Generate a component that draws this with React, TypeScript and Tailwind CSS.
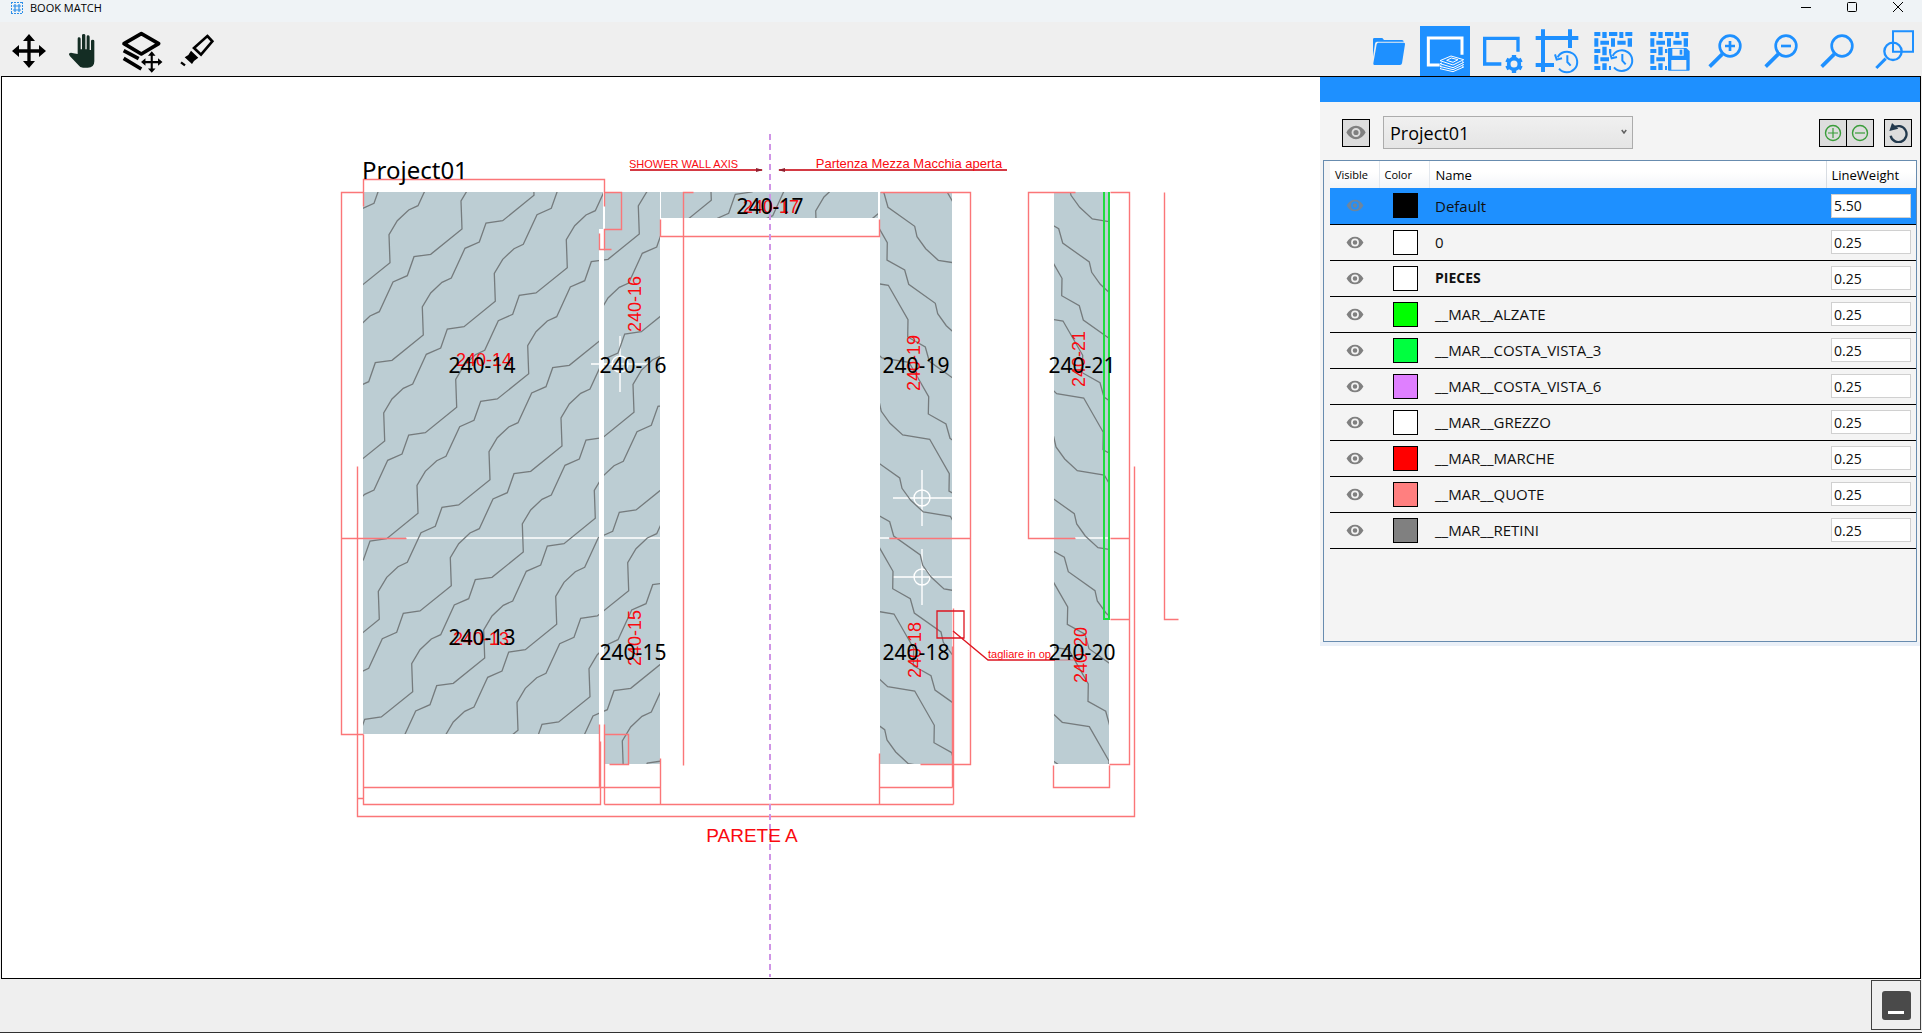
import { useState } from "react";
import type { ReactNode } from "react";

type Point = [number, number];

const layers = [
  { name: "Default", swatch: "bg-black", weight: "5.50" },
  { name: "0", swatch: "bg-white", weight: "0.25" },
  { name: "PIECES", swatch: "bg-white", weight: "0.25", bold: true },
  { name: "__MAR__ALZATE", swatch: "bg-[#00ff00]", weight: "0.25" },
  { name: "__MAR__COSTA_VISTA_3", swatch: "bg-[#00ff3f]", weight: "0.25" },
  { name: "__MAR__COSTA_VISTA_6", swatch: "bg-[#df7fff]", weight: "0.25" },
  { name: "__MAR__GREZZO", swatch: "bg-white", weight: "0.25" },
  { name: "__MAR__MARCHE", swatch: "bg-[#ff0000]", weight: "0.25" },
  { name: "__MAR__QUOTE", swatch: "bg-[#ff7f7f]", weight: "0.25" },
  { name: "__MAR__RETINI", swatch: "bg-[#808080]", weight: "0.25" },
];

/* ---------- toolbar icons ---------- */

function Icon({ children }: { children: ReactNode }) {
  return (
    <svg viewBox="0 0 150 150" className="h-[50px] w-[50px]" fill="none" aria-hidden="true">
      {children}
    </svg>
  );
}

function MoveShape() {
  return (
    <>
      <path d="M75 35V115M35 75H115" stroke="currentColor" strokeWidth="10" />
      <path
        d="M75 24L93 45H57ZM75 126L93 105H57ZM24 75L45 57V93ZM126 75L105 57V93Z"
        fill="currentColor"
      />
    </>
  );
}

function ClockShape() {
  return (
    <>
      <path d="M74 90A31 31 0 1 1 78 124" stroke="currentColor" strokeWidth="6" />
      <path d="M66 81L71 97L87 93" stroke="currentColor" strokeWidth="6" />
      <path d="M103 84V104L113 115" stroke="currentColor" strokeWidth="6" />
    </>
  );
}

function WeaveShape() {
  return (
    <path
      d="M19 18h18v12H19zM43 18h13v18H43zM63 18h25v12H63zM94 18h12v18H94zM112 18h21v12H112z
      M19 37h12v25H19zM37 44h26v12H37zM69 37h12v25H69zM88 44h25v12H88zM119 37h13v25H119z
      M19 69h18v12H19zM43 62h13v26H43zM63 69h7v12H63z
      M19 87h12v26H19zM37 94h26v12H37z
      M19 120h18v12H19zM43 112h13v20H43zM63 120h6v12H63z"
      fill="currentColor"
    />
  );
}

function MagnifierShape() {
  return (
    <>
      <circle cx="90" cy="60" r="31" stroke="currentColor" strokeWidth="8" />
      <path d="M66 85L29 122" stroke="currentColor" strokeWidth="11" />
      <path d="M71 80L58 93" stroke="currentColor" strokeWidth="6" />
    </>
  );
}

const leftTools = [
  {
    label: "Move",
    icon: <MoveShape />,
  },
  {
    label: "Pan",
    icon: (
      <path
        d="M53 84V38q0-4 4-4t5 4v32h4V28q0-4 5-4t5 4v42h4V32q0-4 4-4t5 4v40h4V45q0-4 5-4t5 4v61q0 19-20 19H69q-9 0-14-8L30 91q-5-6-2-9q4-3 12 0z"
        fill="#142d24"
      />
    ),
  },
  {
    label: "Move layers",
    icon: (
      <>
        <path d="M76 23L128 53L76 84L24 53Z" stroke="currentColor" strokeWidth="11" strokeLinejoin="round" />
        <path d="M23 74L68 98M23 97L76 129" stroke="currentColor" strokeWidth="11" />
        <g transform="translate(60 61) scale(0.63)">
          <MoveShape />
        </g>
      </>
    ),
  },
  {
    label: "Highlight",
    icon: (
      <>
        <path d="M106 30L121 46L87 86L66 66Z" stroke="currentColor" strokeWidth="8" />
        <path d="M57 74L79 95L66 105L60 114L38 94L49 87Z" fill="currentColor" />
        <path d="M27 109L39 118" stroke="currentColor" strokeWidth="7" />
      </>
    ),
  },
];

const rightTools = [
  {
    label: "Open",
    icon: (
      <>
        <path d="M27 92V40q0-4 4-4h24l5 6h54q5 0 5 5H39q-5 0-6 6z" fill="currentColor" />
        <path d="M38 55q1-5 5-5h77q4 0 3 5l-9 57q-1 5-6 5H31q-4 0-3-5z" fill="currentColor" />
      </>
    ),
  },
  {
    label: "Layers",
    active: true,
    icon: (
      <>
        <path d="M126 86V36H25V117H59" stroke="currentColor" strokeWidth="9" />
        <path
          d="M60 104L93 90L131 101L99 117ZM66 111L60 113L99 125L131 109L126 107M64 118L60 121L99 131L131 116L127 114M64 125L60 128L99 137L131 123L127 121M80 103l14-7l20 5l-15 8z"
          stroke="currentColor"
          strokeWidth="3"
        />
      </>
    ),
  },
  {
    label: "View settings",
    icon: (
      <>
        <path d="M126 77V37H26V114H76" stroke="currentColor" strokeWidth="10" />
        <circle cx="114" cy="114" r="16" stroke="currentColor" strokeWidth="11" />
        <path
          d="M114 87V98M114 130V141M91 101L101 106M127 122L137 127M91 127L101 122M127 106L137 101"
          stroke="currentColor"
          strokeWidth="13"
        />
      </>
    ),
  },
  {
    label: "Frame history",
    icon: (
      <>
        <path d="M33 10V138M11 36H139M114 10V66M11 117H66" stroke="currentColor" strokeWidth="12" />
        <g transform="translate(3 4)">
          <ClockShape />
        </g>
      </>
    ),
  },
  {
    label: "Pattern history",
    icon: (
      <>
        <WeaveShape />
        <circle cx="98" cy="100" r="33" fill="#f0f0f0" />
        <ClockShape />
      </>
    ),
  },
  {
    label: "Save pattern",
    icon: (
      <>
        <WeaveShape />
        <path d="M75 66h52l10 10v55q0 3-3 3H75q-3 0-3-3V69q0-3 3-3z" fill="currentColor" />
        <path d="M85 68h34v21H85zM82 102h45v29H82z" fill="#f0f0f0" />
        <path d="M107 71h8v15h-8z" fill="currentColor" />
      </>
    ),
  },
  {
    label: "Zoom in",
    icon: (
      <>
        <MagnifierShape />
        <path d="M75 60H105M90 45V75" stroke="currentColor" strokeWidth="8" />
      </>
    ),
  },
  {
    label: "Zoom out",
    icon: (
      <>
        <MagnifierShape />
        <path d="M75 60H105" stroke="currentColor" strokeWidth="8" />
      </>
    ),
  },
  {
    label: "Zoom",
    icon: <MagnifierShape />,
  },
  {
    label: "Zoom window",
    icon: (
      <>
        <path d="M75 16H135V77H75Z" stroke="currentColor" strokeWidth="6" />
        <circle cx="75" cy="76" r="26" stroke="currentColor" strokeWidth="7" />
        <path d="M53 98L25 126" stroke="currentColor" strokeWidth="9" />
      </>
    ),
  },
];

function EyeIcon({ className }: { className: string }) {
  return (
    <svg viewBox="0 0 54 40" className={className} aria-hidden="true">
      <path
        fillRule="evenodd"
        d="M1 20Q11 2 27 2T53 20Q43 38 27 38T1 20ZM27 8a12 12 0 1 0 0 24a12 12 0 1 0 0-24ZM27 13a7 7 0 1 1 0 14a7 7 0 1 1 0-14Z"
        fill="currentColor"
      />
    </svg>
  );
}

/* ---------- marble veins ---------- */

// One repeat of the vein, in thirds of a pixel.
const leftMotif: Point[] = [
  [0, 0], [3, 84], [-91, 160], [-141, 167], [-161, 224],
  [-204, 243], [-245, 332], [-273, 345], [-307, 377],
];
const rightMotif: Point[] = [
  [0, 0], [-1, 52], [52, 82], [64, 125], [144, 182],
  [151, 213], [177, 249], [215, 284], [296, 297],
];

function veins(origin: Point, step: Point, period: Point, motif: Point[], from: number, to: number) {
  let d = "";
  for (let k = from; k <= to; k++) {
    for (let j = -6; j <= 6; j++) {
      motif.forEach(([x, y], i) => {
        const px = (origin[0] + k * step[0] + j * period[0] + x) / 3;
        const py = (origin[1] + k * step[1] + j * period[1] + y) / 3;
        d += `${j === -6 && i === 0 ? "M" : "L"}${px.toFixed(1)} ${py.toFixed(1)}`;
      });
    }
  }
  return d;
}

const leftVeins = veins([1483, 820], [216, -101], [-332, 419], leftMotif, -8, 14);
const rightVeins = veins([2662, 728], [62, 231], [355, 400], rightMotif, -12, 12);

const leftPieces = "M363 192H603V229H599V734H363ZM605 192H660V764H604V229H605ZM661 192H878V218H661Z";
const rightPieces = "M880 192H952V764H880ZM1054 192H1109V764H1054Z";

const pieceLabels = [
  { id: "240-14", x: 482, y: 373, red: { x: 484, y: 366 } },
  { id: "240-13", x: 482, y: 645, red: { x: 481, y: 645 } },
  { id: "240-16", x: 633, y: 373, red: { x: 641, y: 304, up: true } },
  { id: "240-15", x: 633, y: 660, red: { x: 641, y: 638, up: true } },
  { id: "240-17", x: 770, y: 214, red: { x: 771, y: 213 } },
  { id: "240-19", x: 916, y: 373, red: { x: 920, y: 363, up: true } },
  { id: "240-18", x: 916, y: 660, red: { x: 921, y: 650, up: true } },
  { id: "240-21", x: 1082, y: 373, red: { x: 1085, y: 359, up: true } },
  { id: "240-20", x: 1082, y: 660, red: { x: 1087, y: 655, up: true } },
];

function Drawing() {
  return (
    <svg className="h-full w-full" fill="none" role="img" aria-label="Project01 wall drawing">
      <defs>
        <clipPath id="left-pieces">
          <path d={leftPieces} />
        </clipPath>
        <clipPath id="right-pieces">
          <path d={rightPieces} />
        </clipPath>
      </defs>
      <g transform="translate(-2 -77)">
        <path d={leftPieces + rightPieces} fill="#bccdd3" />

        {/* joints and drill marks */}
        <g stroke="#ffffff" strokeWidth="1.4">
          <path d="M406 538H660M880 538H889M1075 538H1109" />
          <path d="M893 498H952M922 470V526M893 577H952M922 549V605M591 364H650M620 336V392" />
          <circle cx="922" cy="498" r="8" />
          <circle cx="922" cy="577" r="8" />
          <circle cx="620" cy="364" r="8" />
        </g>

        <g stroke="#757b7d" strokeWidth="1.3">
          <path d={leftVeins} clipPath="url(#left-pieces)" />
          <path d={rightVeins} clipPath="url(#right-pieces)" />
        </g>

        {/* dimension lines */}
        <path
          d="M363 206V179H604V206M363 192H341V734H363M341 538H406M604 192H621V229H604V250M599 233V249H611
          M357 466V816H1134V466M357 798H363M363 734V804H600V741M363 787H660M599 724V787M604 724V804M604 804H953
          M660 758V804M604 734H628V764H609M660 219V236H879V219M693 192H683V765
          M880 192H970V764H920M889 538H970M1075 192H1028V538H1075M1110 192H1129V764H1109M1110 538H1129
          M1110 619H1129M1164 192V619H1178M879 753V804M953 608V804M952 646V787M879 787H952M1053 765V787H1109V765"
          transform="translate(0.5 0.5)"
          stroke="#fb7678"
          strokeWidth="1.4"
        />
        <path d="M1104 192V619H1109V192" stroke="#1fdd3f" strokeWidth="2" />
        <path d="M770 134V977" stroke="#cf93e6" strokeWidth="2" strokeDasharray="6 4" />
        <path d="M630 170H762M779 170H1007" stroke="#d43a44" strokeWidth="2" />
        <path d="M763 170L756 168V172ZM778 170L785 168V172Z" fill="#902030" />
        <path d="M937 611H964V638H937ZM953 631L988 660H1055" stroke="#dd1520" strokeWidth="1.3" />
        <path d="M1055 660H1080" stroke="#cc8f96" strokeWidth="1.3" />

        <g className="font-['Liberation_Sans',sans-serif]" fill="#fa0a10">
          <text x="629" y="168" className="text-[11px]">SHOWER WALL AXIS</text>
          <text x="909" y="168" textAnchor="middle" className="text-[13px]">
            Partenza Mezza Macchia aperta
          </text>
          <text x="988" y="658" className="text-[11px]">tagliare in op</text>
          <text x="752" y="842" textAnchor="middle" className="text-[19px]">PARETE A</text>
          {pieceLabels.map(({ id, red }) => (
            <text
              key={id}
              textAnchor="middle"
              className="text-[18px]"
              transform={`translate(${red.x} ${red.y}) rotate(${red.up ? -90 : 0})`}
            >
              {id}
            </text>
          ))}
        </g>

        <g className="font-['Noto_Sans',sans-serif]" fill="#000000">
          <text x="362" y="179" className="text-[24px]">Project01</text>
          {pieceLabels.map(({ id, x, y }) => (
            <text key={id} x={x} y={y} textAnchor="middle" className="text-[21px]">
              {id}
            </text>
          ))}
        </g>
      </g>
    </svg>
  );
}

function LayersPanel() {
  const [selected, setSelected] = useState("Default");
  const toolButton = "flex h-7 items-center justify-center border border-black bg-[#dddddd]";

  return (
    <aside className="absolute top-0 right-0 w-[600px] border-b-4 border-[#eaf0f8] bg-[#f4f4f4]">
      <div className="h-[25px] bg-[#1e90ff]" />
      <div className="flex items-center pt-[14px] pr-2 pb-[11px] pl-[22px]">
        <button type="button" aria-label="Toggle all layers" className={`${toolButton} w-7 text-[#808080]`}>
          <EyeIcon className="h-[15px] w-5" />
        </button>
        <div className="relative ml-[13px] w-[250px]">
          <select
            aria-label="Project"
            className="block h-[33px] w-full appearance-none border border-[#acacac] bg-linear-to-b from-[#f0f0f0] to-[#e5e5e5] pl-[6px] text-[18px] leading-7 text-black"
          >
            <option>Project01</option>
          </select>
          <svg viewBox="0 0 8 6" className="pointer-events-none absolute top-[13px] right-[6px] h-[5px] w-[6px]">
            <path d="M1 1L4 5L7 1" fill="none" stroke="#606060" strokeWidth="2" />
          </svg>
        </div>
        <div className="ml-auto flex">
          <button type="button" aria-label="Expand" className={`${toolButton} w-7`}>
            <svg viewBox="0 0 18 18" className="h-[18px] w-[18px]" fill="none" stroke="#3a9d3a">
              <circle cx="9" cy="9" r="7.5" strokeWidth="1.4" />
              <path d="M4 9H14M9 4V14" strokeWidth="1.2" />
            </svg>
          </button>
          <button type="button" aria-label="Collapse" className={`${toolButton} w-[27px] border-l-0`}>
            <svg viewBox="0 0 18 18" className="h-[18px] w-[18px]" fill="none" stroke="#3a9d3a">
              <circle cx="9" cy="9" r="7.5" strokeWidth="1.4" />
              <path d="M4 9H14" strokeWidth="1.2" />
            </svg>
          </button>
        </div>
        <button type="button" aria-label="Reset" className={`${toolButton} ml-[10px] w-7`}>
          <svg viewBox="0 0 60 60" className="h-5 w-5" fill="none">
            <path d="M16 15A24 24 0 1 1 8 38" stroke="#22394d" strokeWidth="7" />
            <path d="M12 0L31 17L4 24Z" fill="#22394d" />
          </svg>
        </button>
      </div>

      <div className="mr-[3px] ml-[3px] h-[482px] border border-[#688caf] pl-[6px]">
        <table className="w-full table-fixed border-collapse text-left">
          <thead>
            <tr className="h-[27px] bg-linear-to-b from-white from-40% to-[#f3f5f8] text-[13px] leading-4 text-black">
              <th className="w-[49px] border-r border-[#e3e8ee] pl-[5px] text-[11px] font-normal">Visible</th>
              <th className="w-[50px] border-r border-[#e3e8ee] pl-[5px] text-[11px] font-normal">Color</th>
              <th className="border-r border-[#d8dde3] pl-[6px] font-normal">Name</th>
              <th className="w-[90px] pl-[5px] font-normal">LineWeight</th>
            </tr>
          </thead>
          <tbody>
            {layers.map((layer) => (
              <tr
                key={layer.name}
                onClick={() => setSelected(layer.name)}
                className={`h-9 border-b border-black ${layer.name === selected ? "bg-[#1e90ff]" : ""}`}
              >
                <td>
                  <button
                    type="button"
                    aria-label={`Visibility of ${layer.name}`}
                    className={`mx-auto block ${layer.name === selected ? "text-[#6c86a0]" : "text-[#808080]"}`}
                  >
                    <EyeIcon className="h-[13px] w-[18px]" />
                  </button>
                </td>
                <td className="pl-[14px]">
                  <button
                    type="button"
                    aria-label={`Color of ${layer.name}`}
                    className={`block h-[25px] w-[25px] border border-black ${layer.swatch}`}
                  />
                </td>
                <td className={`pl-[6px] leading-5 text-[#101010] ${layer.bold ? "text-[14px] font-bold" : "text-[15px]"}`}>
                  {layer.name}
                </td>
                <td className="pl-[5px]">
                  <input
                    type="text"
                    aria-label={`LineWeight of ${layer.name}`}
                    defaultValue={layer.weight}
                    className="block h-6 w-20 border border-[#d0d0d0] bg-white pl-[2px] text-[14px] leading-5 text-[#101010]"
                  />
                </td>
              </tr>
            ))}
          </tbody>
        </table>
      </div>
    </aside>
  );
}

export default function App() {
  return (
    <div className="flex h-screen flex-col overflow-hidden border-b border-[#303030] bg-[#efefef] font-['Open_Sans',sans-serif] text-black">
      <header className="flex h-[22px] items-start justify-between bg-[#eff3f6]">
        <div className="flex h-4 items-center gap-[7px] pl-[11px]">
          <svg viewBox="0 0 12 12" className="h-3 w-3" fill="none" stroke="#2f8fe8" aria-hidden="true">
            <path d="M0 0.5H12M0 11.5H12M0.5 0V12M11.5 0V12" strokeDasharray="2 1" />
            <path d="M2 4H10M2 8H10M4 2V10M8 2V10" strokeWidth="1.2" />
          </svg>
          <h1 className="text-[11px] leading-4">BOOK MATCH</h1>
        </div>
        <div className="mr-px flex h-[15px]">
          <button type="button" aria-label="Minimize" className="flex w-[46px] items-center justify-center">
            <svg viewBox="0 0 11 11" className="h-[11px] w-[11px]" stroke="#000">
              <path d="M0 5.5H10" />
            </svg>
          </button>
          <button type="button" aria-label="Maximize" className="flex w-[46px] items-center justify-center">
            <svg viewBox="0 0 11 11" className="h-[11px] w-[11px]" fill="none" stroke="#000">
              <rect x="0.5" y="0.5" width="9" height="9" rx="1" />
            </svg>
          </button>
          <button type="button" aria-label="Close" className="flex w-[46px] items-center justify-center">
            <svg viewBox="0 0 11 11" className="h-[11px] w-[11px]" stroke="#000">
              <path d="M0 0L10 10M10 0L0 10" />
            </svg>
          </button>
        </div>
      </header>

      <nav className="flex h-[54px] items-end justify-between pr-1 pl-1">
        <div className="flex gap-[6px]">
          {leftTools.map((tool) => (
            <button key={tool.label} type="button" aria-label={tool.label} className="block text-black">
              <Icon>{tool.icon}</Icon>
            </button>
          ))}
        </div>
        <div className="flex gap-[6px]">
          {rightTools.map((tool) => (
            <button
              key={tool.label}
              type="button"
              aria-label={tool.label}
              className={`block ${tool.active ? "bg-[#1e90ff] text-white" : "text-[#1e90ff]"}`}
            >
              <Icon>{tool.icon}</Icon>
            </button>
          ))}
        </div>
      </nav>

      <main className="relative mr-px ml-px min-h-0 flex-1 border border-black bg-white">
        <Drawing />
        <LayersPanel />
      </main>

      <footer className="flex h-[53px] items-start justify-end pt-px pr-px">
        <button
          type="button"
          aria-label="Hide panel"
          className="flex h-[50px] w-[50px] items-center justify-center border border-[#404040]"
        >
          <span className="flex h-[29px] w-[29px] items-end justify-center rounded-[3px] bg-[#4a4a4a] pb-[6px]">
            <span className="h-[3px] w-4 bg-white" />
          </span>
        </button>
      </footer>
    </div>
  );
}
